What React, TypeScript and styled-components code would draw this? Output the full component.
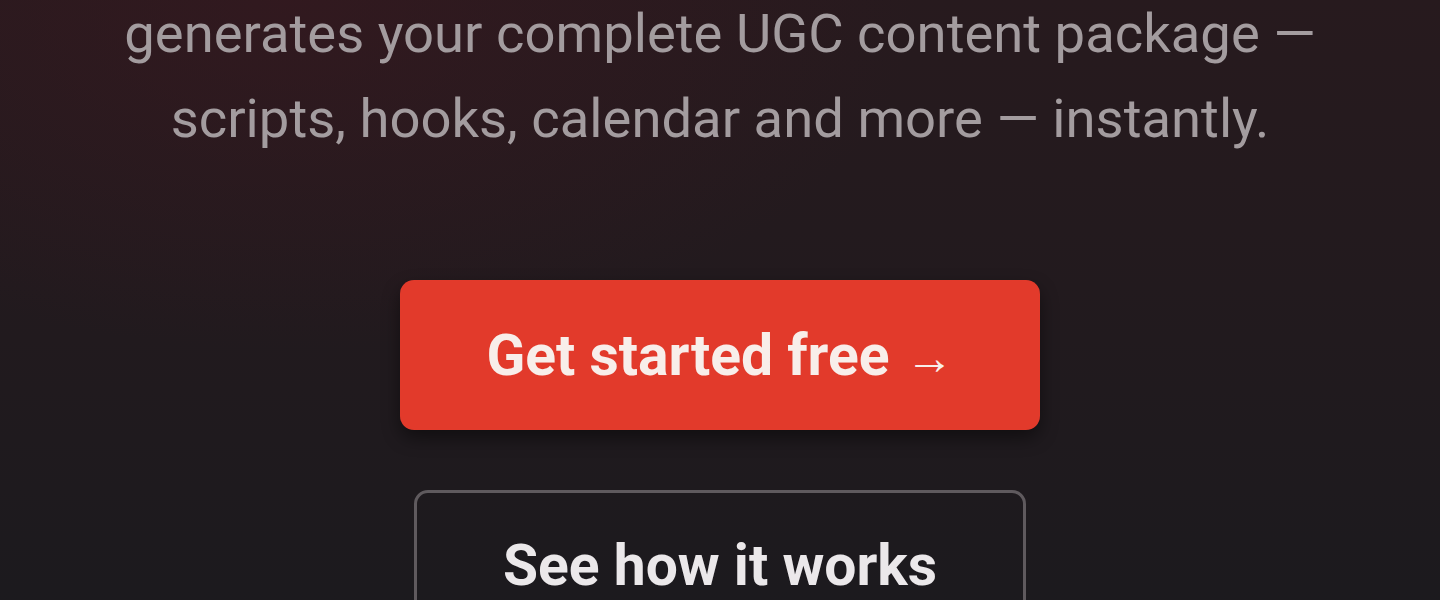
import styled, { createGlobalStyle } from 'styled-components';

const GlobalStyle = createGlobalStyle`
    html, body {
        margin: 0;
        padding: 0;
        height: 100%;
    }
    body {
        background: #1c1a1f;
        font-family: Roboto, "Noto Sans", "Liberation Sans", sans-serif;
        overflow: hidden;
    }
`;

const Hero = styled.section`
    min-height: 600px;
    display: flex;
    flex-direction: column;
    align-items: center;
    background:
        radial-gradient(ellipse 900px 500px at 20% 0%, rgba(60, 24, 32, 0.5), transparent 70%),
        linear-gradient(180deg, #271a1e 0%, #221a1e 45%, #1b1a1e 100%);
    overflow: hidden;
`;

const Lead = styled.p`
    margin: -9px 0 0;
    text-align: center;
    font-size: 54.4px;
    line-height: 85px;
    color: #a39c9f;
    white-space: nowrap;
`;

const Actions = styled.div`
    margin-top: 119px;
    display: flex;
    flex-direction: column;
    align-items: center;
    gap: 60px;
`;

type ButtonProps = {
    $variant?: 'primary' | 'outline',
};

const Button = styled.a<ButtonProps>`
    box-sizing: border-box;
    display: inline-flex;
    align-items: center;
    justify-content: center;
    gap: 16px;
    height: 150px;
    padding: 0 86px;
    border-radius: 14px;
    font-size: 57px;
    font-weight: 700;
    text-decoration: none;
    color: ${props => props.$variant === 'outline' ? '#ebe8ea' : '#f8eeea'};
    background: ${props => props.$variant === 'outline' ? 'transparent' : '#e23a2b'};
    border: ${props => props.$variant === 'outline' ? '3px solid #5f5a5e' : 'none'};
    box-shadow: ${props => props.$variant === 'outline' ? 'none' : '0 8px 18px rgba(0, 0, 0, 0.45)'};
`;

const Arrow = styled.span`
    font-size: 48px;
    font-weight: 700;
    line-height: 1;
    margin-top: 6px;
`;

const App = () => {
    return (
        <>
            <GlobalStyle />
            <Hero>
                <Lead>
                    generates your complete UGC content package —<br />
                    scripts, hooks, calendar and more — instantly.
                </Lead>
                <Actions>
                    <Button href="#">
                        Get started free <Arrow>→</Arrow>
                    </Button>
                    <Button href="#" $variant="outline">
                        See how it works
                    </Button>
                </Actions>
            </Hero>
        </>
    );
};

export default App;
